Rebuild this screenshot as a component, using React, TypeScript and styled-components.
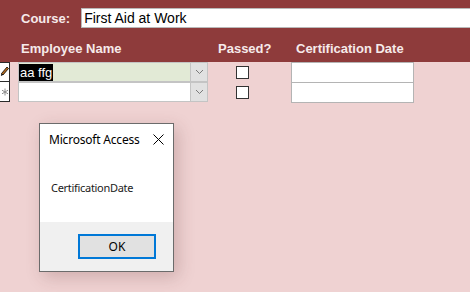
import React from "react";
import styled, { createGlobalStyle } from "styled-components";

const Global = createGlobalStyle`
  html, body { margin: 0; padding: 0; }
  * { box-sizing: border-box; }
  body { background: #efd2d2; width: 470px; height: 292px; overflow: hidden; font-family: "Liberation Sans", Arial, sans-serif; }
`;

const Page = styled.div`
  position: relative;
  width: 470px;
  height: 292px;
  background: #efd2d2;
`;

const Header = styled.div`
  background: #8e3b3b;
  height: 62px;
  display: flex;
  flex-direction: column;
`;

const CourseRow = styled.div`
  display: flex;
  align-items: center;
  margin-top: 8px;
  height: 20px;
`;

const HeaderLabel = styled.span<{ $left?: number }>`
  color: #f6eaea;
  font-weight: bold;
  font-size: 13px;
  margin-left: ${(p) => p.$left ?? 0}px;
  white-space: nowrap;
`;

const CourseBox = styled.div`
  margin-left: 11px;
  flex: 1;
  height: 20px;
  background: #fff;
  border: 1px solid #b9b9b9;
  border-right: none;
  font-size: 14px;
  color: #000;
  line-height: 18px;
  padding-left: 2px;
`;

const Grid = styled.div`
  display: grid;
  grid-template-columns: 18px 190px 83px 123px;
  grid-auto-rows: 20px;
`;

const ColumnHeads = styled(Grid)`
  margin-top: 10px;
  align-items: center;
`;

const Rows = styled(Grid)``;

const Selector = styled.div<{ $first?: boolean }>`
  width: 10px;
  height: 20px;
  background: #fff;
  border-right: 1px solid #2a2a2a;
  border-bottom: 1px solid #2a2a2a;
  border-top: ${(p) => (p.$first ? "1px solid #2a2a2a" : "none")};
  display: flex;
  align-items: center;
  justify-content: center;
  overflow: hidden;
`;

const Combo = styled.div<{ $current?: boolean }>`
  height: 20px;
  border: 1px solid #c4c4c4;
  background: ${(p) => (p.$current ? "#e2ead6" : "#ffffff")};
  display: flex;
  align-items: stretch;
`;

const ComboText = styled.div`
  flex: 1;
  display: flex;
  align-items: center;
  font-size: 13px;
`;

const Selected = styled.span`
  background: #000;
  color: #fff;
  height: 17px;
  line-height: 17px;
  padding: 0 1px;
`;

const DropButton = styled.div`
  width: 17px;
  background: #e1e1e1;
  border-left: 1px solid #c4c4c4;
  display: flex;
  align-items: center;
  justify-content: center;
`;

const CheckCell = styled.div`
  padding-left: 28px;
  display: flex;
  align-items: center;
`;

const Check = styled.div`
  width: 13px;
  height: 13px;
  border: 1px solid #333;
  background: #fff;
`;

const DateBox = styled.div`
  height: 21px;
  border: 1px solid #b4b4b4;
  background: #fff;
`;

const Dialog = styled.div`
  position: absolute;
  left: 39px;
  top: 123px;
  width: 135px;
  height: 149px;
  border: 1px solid #6b6b6b;
  background: #fff;
  box-shadow: 4px 5px 16px rgba(90, 40, 40, 0.22);
  display: flex;
  flex-direction: column;
  font-family: "Noto Sans", "Open Sans", sans-serif;
`;

const TitleBar = styled.div`
  height: 30px;
  display: flex;
  align-items: center;
  justify-content: space-between;
  padding: 0 9px 0 9px;
  font-size: 12px;
  color: #000;
  letter-spacing: -0.2px;
`;

const Message = styled.div`
  flex: 1;
  padding: 26px 0 0 11px;
  font-size: 11px;
  color: #1a1a1a;
  letter-spacing: -0.3px;
`;

const Footer = styled.div`
  height: 49px;
  background: #f0f0f0;
  display: flex;
  align-items: flex-start;
  justify-content: flex-end;
  padding: 12px 17px 0 0;
`;

const OkButton = styled.div`
  width: 78px;
  height: 25px;
  border: 2px solid #0078d7;
  background: #e1e1e1;
  display: flex;
  align-items: center;
  justify-content: center;
  font-size: 12px;
  color: #000;
`;

const Chevron = () => (
  <svg width="9" height="6" viewBox="0 0 9 6">
    <polyline points="1,1 4.5,4.5 8,1" fill="none" stroke="#7a7a7a" strokeWidth="1" />
  </svg>
);

const Pencil = () => (
  <svg width="9" height="12" viewBox="0 0 9 12">
    <path d="M7 1 L8.5 2.5 L3 9 L1.5 7.5 Z" fill="#b36b1f" stroke="#000" strokeWidth="0.8" />
    <path d="M1.5 7.5 L3 9 L0.8 10 Z" fill="#000" />
  </svg>
);

const Asterisk = () => (
  <svg width="8" height="8" viewBox="0 0 8 8">
    <path d="M4 0.5 V7.5 M1 2.2 L7 5.8 M7 2.2 L1 5.8" stroke="#8c8c8c" strokeWidth="1" />
  </svg>
);

const Close = () => (
  <svg width="11" height="11" viewBox="0 0 11 11">
    <path d="M0.5 0.5 L10.5 10.5 M10.5 0.5 L0.5 10.5" stroke="#000" strokeWidth="1" />
  </svg>
);

export default function App() {
  return (
    <Page>
      <Global />
      <Header>
        <CourseRow>
          <HeaderLabel $left={21}>Course:</HeaderLabel>
          <CourseBox>First Aid at Work</CourseBox>
        </CourseRow>
        <ColumnHeads>
          <div />
          <HeaderLabel $left={3}>Employee Name</HeaderLabel>
          <HeaderLabel $left={10}>Passed?</HeaderLabel>
          <HeaderLabel $left={5}>Certification Date</HeaderLabel>
        </ColumnHeads>
      </Header>
      <Rows>
        <Selector $first>
          <Pencil />
        </Selector>
        <Combo $current>
          <ComboText>
            <Selected>aa ffg</Selected>
          </ComboText>
          <DropButton>
            <Chevron />
          </DropButton>
        </Combo>
        <CheckCell>
          <Check />
        </CheckCell>
        <DateBox />

        <Selector>
          <Asterisk />
        </Selector>
        <Combo>
          <ComboText />
          <DropButton>
            <Chevron />
          </DropButton>
        </Combo>
        <CheckCell>
          <Check />
        </CheckCell>
        <DateBox />
      </Rows>
      <Dialog>
        <TitleBar>
          <span>Microsoft Access</span>
          <Close />
        </TitleBar>
        <Message>CertificationDate</Message>
        <Footer>
          <OkButton>OK</OkButton>
        </Footer>
      </Dialog>
    </Page>
  );
}
